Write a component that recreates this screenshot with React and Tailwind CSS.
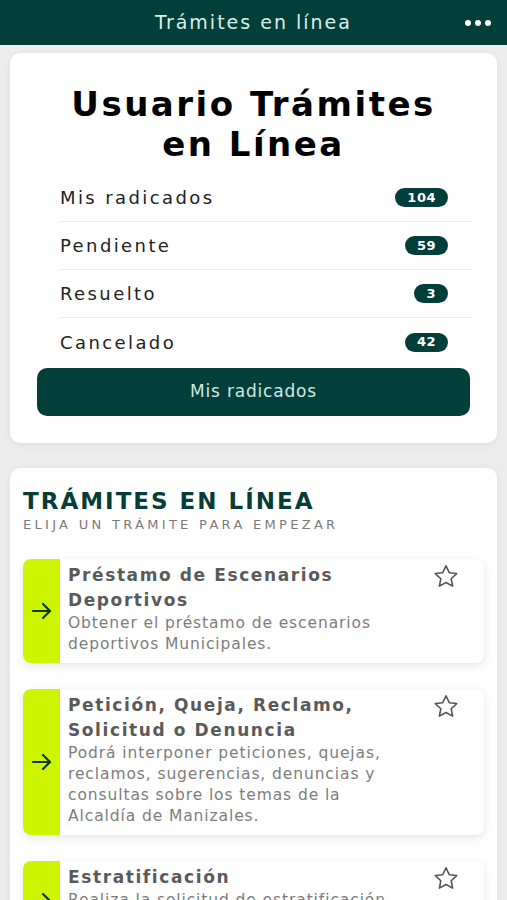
import React from "react";

const font = { fontFamily: '"DejaVu Sans", "Noto Sans", sans-serif' };

const stats = [
  { label: "Mis radicados", count: 104 },
  { label: "Pendiente", count: 59 },
  { label: "Resuelto", count: 3 },
  { label: "Cancelado", count: 42 },
];

const tramites = [
  {
    title: "Préstamo de Escenarios Deportivos",
    desc: "Obtener el préstamo de escenarios deportivos Municipales.",
  },
  {
    title: "Petición, Queja, Reclamo, Solicitud o Denuncia",
    desc: "Podrá interponer peticiones, quejas, reclamos, sugerencias, denuncias y consultas sobre los temas de la Alcaldía de Manizales.",
  },
  {
    title: "Estratificación",
    desc: "Realiza la solicitud de estratificación de tu predio.",
  },
];

function Arrow() {
  return (
    <svg width="22" height="18" viewBox="0 0 22 18" fill="none" stroke="#0b3a16" strokeWidth="2.2" strokeLinecap="round" strokeLinejoin="round">
      <path d="M2 9h17" />
      <path d="M12 2l7 7-7 7" />
    </svg>
  );
}

function Star() {
  return (
    <svg width="28" height="27" viewBox="0 0 24 24" fill="none" stroke="#555" strokeWidth="1.4" strokeLinejoin="round">
      <path d="M12 2.5l2.9 6.1 6.6.8-4.9 4.6 1.3 6.6L12 17.3l-5.9 3.3 1.3-6.6-4.9-4.6 6.6-.8z" />
    </svg>
  );
}

function TramiteItem({ title, desc }) {
  return (
    <div className="flex rounded-lg bg-white shadow-[0_3px_10px_rgba(0,0,0,0.10)] overflow-hidden">
      <div className="w-[37px] shrink-0 bg-[#cef500] flex items-center justify-center">
        <Arrow />
      </div>
      <div className="flex-1 pl-[8px] pr-[79px] pt-[4px] pb-[8px] relative">
        <div className="text-[17px] font-bold leading-[25px] tracking-[1.6px] text-[#5a5a5a]">{title}</div>
        <div className="text-[15.5px] leading-[21px] tracking-[0.9px] text-[#7d7d7d]">{desc}</div>
        <div className="absolute right-[24px] top-[4px]">
          <Star />
        </div>
      </div>
    </div>
  );
}

export default function App() {
  return (
    <div className="w-[507px] h-[900px] overflow-hidden bg-[#ececec]" style={font}>
      <header className="h-[45px] bg-[#023e3a] flex items-center justify-center relative">
        <span className="text-[19px] tracking-[2px] text-[#d8efe9]">Trámites en línea</span>
        <div className="absolute right-[16px] top-[20px] flex gap-[4px]">
          <span className="w-[6px] h-[6px] rounded-full bg-white" />
          <span className="w-[6px] h-[6px] rounded-full bg-white" />
          <span className="w-[6px] h-[6px] rounded-full bg-white" />
        </div>
      </header>

      <div className="px-[10px] pt-[8px] flex flex-col gap-[25px]">
        <section className="bg-white rounded-[10px] shadow-[0_2px_8px_rgba(0,0,0,0.06)] pt-[31px] pb-[27px]">
          <h1 className="text-center text-[34px] font-bold leading-[40px] tracking-[2.5px] text-black">
            Usuario Trámites
            <br />
            en Línea
          </h1>
          <div className="pl-[50px] pr-[24px] mt-[10px]">
            {stats.map((s, i) => (
              <div
                key={s.label}
                className={`flex items-center justify-between h-[48px] pr-[25px] ${i < stats.length - 1 ? "border-b border-[#ececec]" : ""}`}
              >
                <span className="text-[18px] tracking-[2.4px] text-[#222]">{s.label}</span>
                <span className="h-[19px] min-w-[30px] px-[12px] rounded-full bg-[#023e3a] text-white text-[13px] font-bold tracking-[0.5px] flex items-center justify-center">
                  {s.count}
                </span>
              </div>
            ))}
          </div>
          <div className="px-[27px] mt-[2px]">
            <button className="w-full h-[48px] rounded-[10px] bg-[#023e3a] text-[#cfe8e3] text-[17px] tracking-[0.8px]">
              Mis radicados
            </button>
          </div>
        </section>

        <section className="bg-white rounded-[10px] shadow-[0_2px_8px_rgba(0,0,0,0.06)] px-[13px] pt-[20px] pb-[30px]">
          <h2 className="text-[23px] font-bold leading-[26px] tracking-[2px] text-[#073d38]">TRÁMITES EN LÍNEA</h2>
          <p className="text-[13px] leading-[18px] tracking-[3.3px] text-[#7a7a7a] mt-[2px]">ELIJA UN TRÁMITE PARA EMPEZAR</p>
          <div className="mt-[25px] flex flex-col gap-[26px]">
            {tramites.map((t) => (
              <TramiteItem key={t.title} {...t} />
            ))}
          </div>
        </section>
      </div>
    </div>
  );
}
